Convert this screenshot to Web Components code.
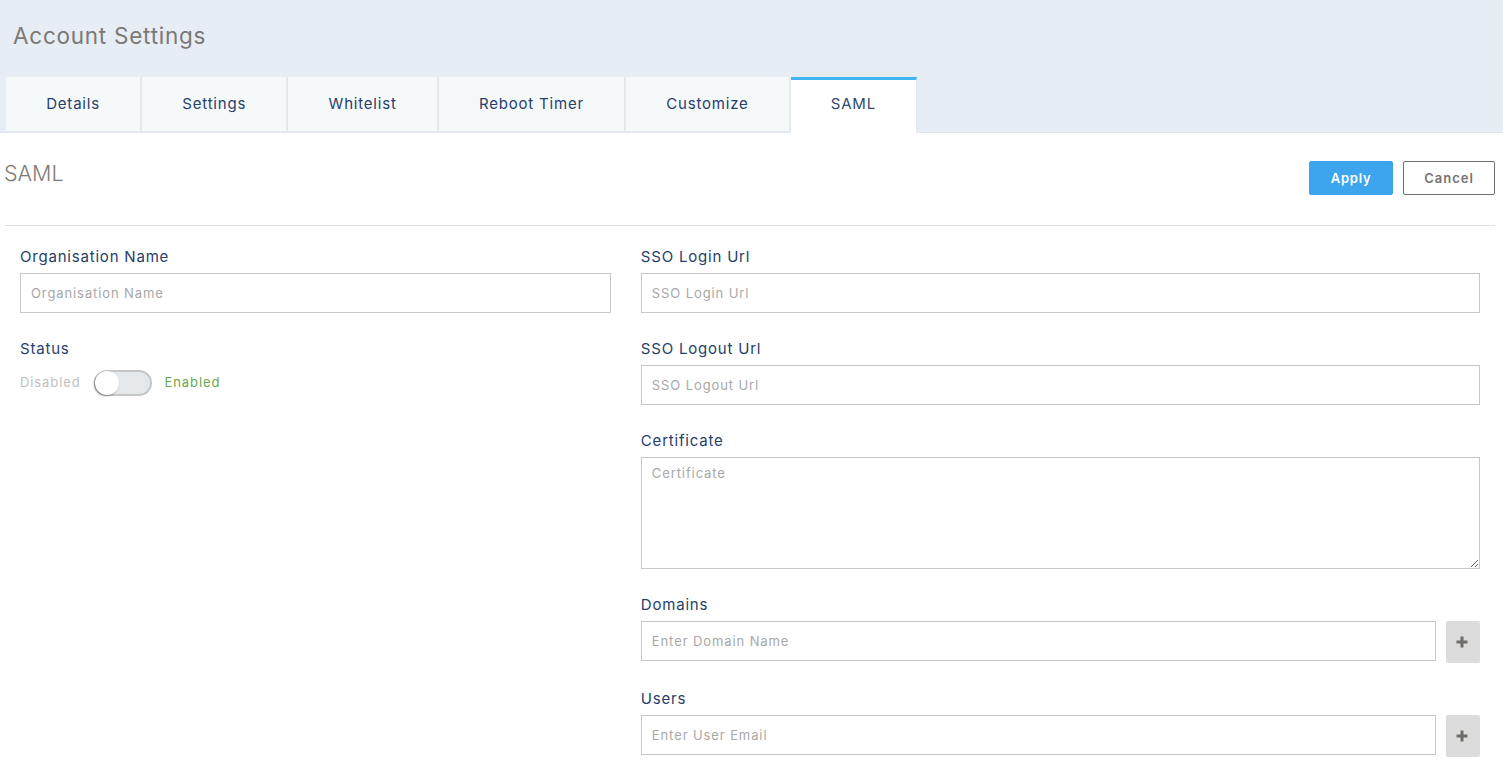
<!DOCTYPE html>
<html lang="en"><head><meta charset="utf-8"><title>Account Settings</title>
<style>
html,body{margin:0;padding:0;background:#fff;font-family:Inter,"Liberation Sans",sans-serif;overflow:hidden}
body{height:771px}
.cols{display:grid;grid-template-columns:41.6667% 58.3333%;}
.col{padding:0 15px;display:flex;flex-direction:column;min-width:0}
</style></head><body>
<page-header heading="Account Settings">
  <tab-item>Details</tab-item><tab-item>Settings</tab-item><tab-item>Whitelist</tab-item><tab-item>Reboot Timer</tab-item><tab-item>Customize</tab-item><tab-item active>SAML</tab-item>
</page-header>
<section-panel heading="SAML">
  <div class="cols">
    <div class="col">
      <form-field label="Organisation Name" placeholder="Organisation Name"></form-field>
      <status-toggle></status-toggle>
    </div>
    <div class="col">
      <form-field label="SSO Login Url" placeholder="SSO Login Url"></form-field>
      <form-field label="SSO Logout Url" placeholder="SSO Logout Url"></form-field>
      <form-field label="Certificate" placeholder="Certificate" multiline></form-field>
      <form-field label="Domains" placeholder="Enter Domain Name" addable></form-field>
      <form-field label="Users" placeholder="Enter User Email" addable></form-field>
    </div>
  </div>
</section-panel>
<script>
const def=(name,html)=>customElements.define(name,class extends HTMLElement{
  constructor(){super();this.attachShadow({mode:'open'}).innerHTML=typeof html==='function'?html(this):html;}
  connectedCallback(){
    this.shadowRoot.querySelectorAll('[data-attr]').forEach(n=>{n.textContent=this.getAttribute(n.dataset.attr)||''});
  }
});
def('page-header',`<style>
:host{display:block;height:133px;background:#e7edf5;box-sizing:border-box;border-bottom:1px solid #e2e6ec;position:relative}
h1{margin:0;height:77px;box-sizing:border-box;padding:21px 0 0 13px;font:400 22.5px/30px Inter,"Liberation Sans",sans-serif;letter-spacing:.75px;color:#7b7875}
nav{display:flex;padding-left:6px;height:56px;box-sizing:border-box}
</style><h1 data-attr="heading"></h1><nav><slot></slot></nav>`);
def('tab-item',`<style>
:host{display:block;height:55px;box-sizing:border-box;padding:0 40.2px;background:#f6f9fa;border-right:2px solid #e3e8ee;border-bottom:1px solid #e3e8ee;
 font:400 15px/53px Inter,"Liberation Sans",sans-serif;letter-spacing:.8px;color:#27406b;white-space:nowrap}
:host([active]){background:#fff;border-top:3px solid #41b4f2;border-bottom:0;border-right:1px solid #e3e8ee;height:56px;line-height:48px;color:#2f4a6b;padding:0 40px;z-index:1}
</style><slot></slot>`);
def('section-panel',`<style>
:host{display:block;padding:0 8px 0 5px}
header{display:flex;justify-content:space-between;height:93px;box-sizing:border-box;border-bottom:1px solid #dedede;padding-top:28px;margin-bottom:21px}
h2{margin:0;font:300 21.5px/25px Inter,"Liberation Sans",sans-serif;color:#7f7a76;margin-left:-1px}
.acts{display:flex;gap:10px;align-items:flex-start}
</style><header><h2 data-attr="heading"></h2><div class="acts"><app-button primary>Apply</app-button><app-button>Cancel</app-button></div></header><slot></slot>`);
def('app-button',`<style>
:host{display:block;box-sizing:border-box;height:34px;border-radius:2px;border:1px solid #6f6f6f;background:#fff;color:#76726f;width:92px;text-align:center;
 font:600 13px/32px Inter,"Liberation Sans",sans-serif;letter-spacing:1px}
:host([primary]){background:#3ca5ee;border-color:#3ca5ee;color:#fff;width:84px;letter-spacing:.75px}
</style><slot></slot>`);
def('form-field',el=>{
 const ph=el.getAttribute('placeholder');
 const multi=el.hasAttribute('multiline'),add=el.hasAttribute('addable');
 return `<style>
:host{display:block;margin-bottom:26px}
label{display:block;font:400 15px/20px Inter,"Liberation Sans",sans-serif;letter-spacing:.8px;color:#26406a;margin-bottom:6px}
.row{display:flex;gap:10px;align-items:flex-start}
input,textarea{flex:1;min-width:0;width:100%;box-sizing:border-box;height:40px;border:1px solid #c8c8c8;border-radius:0;padding:0 10px;margin:0;outline:0;background:#fff;display:block;
 font:400 13px/18px Inter,"Liberation Sans",sans-serif;letter-spacing:.9px;color:#555}
textarea{height:112px;padding:6px 10px;resize:vertical}
::placeholder{color:#a8a8a8;opacity:1}
.plus{flex:none;width:34px;height:42px;background:#dcdcdc;border-radius:2px;display:flex;align-items:center;justify-content:center}
svg{display:block;margin-left:-1px}
</style><label data-attr="label"></label><div class="row">${multi?`<textarea placeholder="${ph}"></textarea>`:`<input type="text" placeholder="${ph}">`}${add?`<div class="plus"><svg width="12" height="12" viewBox="0 0 12 12"><path d="M4.5 .5h3v4h4v3h-4v4h-3v-4h-4v-3h4z" fill="#6f6c68"/></svg></div>`:''}</div>`});
def('status-toggle',`<style>
:host{display:block}
label{display:block;font:400 15px/20px Inter,"Liberation Sans",sans-serif;letter-spacing:.8px;color:#26406a;margin-bottom:11px}
.row{display:flex;align-items:center;gap:14px;font:400 13px/25px Inter,"Liberation Sans",sans-serif;letter-spacing:.9px}
.off{color:#c2c0be;margin-right:-1px}.on{color:#68a850;margin-left:-1px}
.sw{width:58px;height:26px;box-sizing:border-box;border-radius:13px;background:#e5e8ea;border:2px solid #c6c6c6;position:relative}
.knob{position:absolute;left:-1px;top:-1px;width:24px;height:24px;border-radius:50%;background:#fff;box-shadow:-1px 1px 2px rgba(0,0,0,.4)}
span{align-self:flex-start}
</style><label>Status</label><div class="row"><span class="off">Disabled</span><div class="sw"><div class="knob"></div></div><span class="on">Enabled</span></div>`);
</script>
</body></html>
